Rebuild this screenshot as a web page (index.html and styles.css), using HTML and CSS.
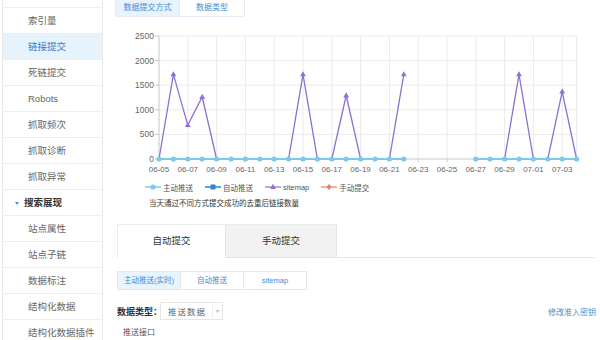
FILE: index.html
```html
<!DOCTYPE html>
<html lang="zh-CN">
<head>
  <meta charset="UTF-8">
  <title>链接提交</title>
  <link rel="stylesheet" href="styles.css">
</head>
<body>
  <div class="page">
    <ul class="side-nav">
      <li class="cut"></li>
      <li>索引量</li>
      <li class="active">链接提交</li>
      <li>死链提交</li>
      <li>Robots</li>
      <li>抓取频次</li>
      <li>抓取诊断</li>
      <li>抓取异常</li>
      <li class="group"><span class="caret"></span>搜索展现</li>
      <li>站点属性</li>
      <li>站点子链</li>
      <li>数据标注</li>
      <li>结构化数据</li>
      <li>结构化数据插件</li>
    </ul>

    <div class="main">
      <div class="top-tabs">
        <span class="on">数据提交方式</span>
        <span>数据类型</span>
      </div>

      <svg class="chart" width="485" height="155" viewBox="0 0 485 155">
        <defs>
          <circle id="dot" r="2.6" fill="#7ec8e8"/>
          <path id="tri" d="M0,-3.2 L2.9,1.9 L-2.9,1.9Z" fill="#8e6fd4"/>
        </defs>
        <!-- grid -->
        <g class="grid">
          <line x1="44" y1="14" x2="461.6" y2="14"/>
          <line x1="44" y1="38.6" x2="461.6" y2="38.6"/>
          <line x1="44" y1="63.2" x2="461.6" y2="63.2"/>
          <line x1="44" y1="87.8" x2="461.6" y2="87.8"/>
          <line x1="44" y1="112.4" x2="461.6" y2="112.4"/>
          <line x1="72.8" y1="14" x2="72.8" y2="137"/>
          <line x1="101.6" y1="14" x2="101.6" y2="137"/>
          <line x1="130.4" y1="14" x2="130.4" y2="137"/>
          <line x1="159.2" y1="14" x2="159.2" y2="137"/>
          <line x1="188" y1="14" x2="188" y2="137"/>
          <line x1="216.8" y1="14" x2="216.8" y2="137"/>
          <line x1="245.6" y1="14" x2="245.6" y2="137"/>
          <line x1="274.4" y1="14" x2="274.4" y2="137"/>
          <line x1="303.2" y1="14" x2="303.2" y2="137"/>
          <line x1="332" y1="14" x2="332" y2="137"/>
          <line x1="360.8" y1="14" x2="360.8" y2="137"/>
          <line x1="389.6" y1="14" x2="389.6" y2="137"/>
          <line x1="418.4" y1="14" x2="418.4" y2="137"/>
          <line x1="447.2" y1="14" x2="447.2" y2="137"/>
          <line x1="461.6" y1="14" x2="461.6" y2="137"/>
        </g>
        <!-- axes -->
        <g class="axis">
          <line x1="44" y1="14" x2="44" y2="137"/>
          <line x1="44" y1="137" x2="461.6" y2="137"/>
          <line x1="40" y1="14" x2="44" y2="14"/>
          <line x1="40" y1="38.6" x2="44" y2="38.6"/>
          <line x1="40" y1="63.2" x2="44" y2="63.2"/>
          <line x1="40" y1="87.8" x2="44" y2="87.8"/>
          <line x1="40" y1="112.4" x2="44" y2="112.4"/>
          <line x1="40" y1="137" x2="44" y2="137"/>
          <line x1="303.2" y1="137" x2="303.2" y2="140"/>
          <line x1="332" y1="137" x2="332" y2="140"/>
        </g>
        <g class="ylab">
          <text x="39" y="17">2500</text>
          <text x="39" y="41.6">2000</text>
          <text x="39" y="66.2">1500</text>
          <text x="39" y="90.8">1000</text>
          <text x="39" y="115.4">500</text>
          <text x="39" y="140">0</text>
        </g>
        <g class="xlab">
          <text x="44" y="150">06-05</text>
          <text x="72.8" y="150">06-07</text>
          <text x="101.6" y="150">06-09</text>
          <text x="130.4" y="150">06-11</text>
          <text x="159.2" y="150">06-13</text>
          <text x="188" y="150">06-15</text>
          <text x="216.8" y="150">06-17</text>
          <text x="245.6" y="150">06-19</text>
          <text x="274.4" y="150">06-21</text>
          <text x="303.2" y="150">06-23</text>
          <text x="332" y="150">06-25</text>
          <text x="360.8" y="150">06-27</text>
          <text x="389.6" y="150">06-29</text>
          <text x="418.4" y="150">07-01</text>
          <text x="447.2" y="150">07-03</text>
        </g>
        <!-- sitemap -->
        <polyline class="sitemap" points="44,137 58.4,52.4 72.8,103.1 87.2,75 101.6,137 116,137 130.4,137 144.8,137 159.2,137 173.6,137 188,52.4 202.4,137 216.8,137 231.2,73.5 245.6,137 260,137 274.4,137 288.8,52.4"/>
        <polyline class="sitemap" points="360.8,137 375.2,137 389.6,137 404,52.4 418.4,137 432.8,137 447.2,69.6 461.6,137"/>
        <use href="#tri" x="58.4" y="52.4"/>
        <use href="#tri" x="72.8" y="103.1"/>
        <use href="#tri" x="87.2" y="75"/>
        <use href="#tri" x="188" y="52.4"/>
        <use href="#tri" x="231.2" y="73.5"/>
        <use href="#tri" x="288.8" y="52.4"/>
        <use href="#tri" x="404" y="52.4"/>
        <use href="#tri" x="447.2" y="69.6"/>
        <!-- 主动推送 -->
        <line class="push" x1="44" y1="137" x2="288.8" y2="137"/>
        <line class="push" x1="360.8" y1="137" x2="461.6" y2="137"/>
        <use href="#dot" x="44" y="137"/>
        <use href="#dot" x="58.4" y="137"/>
        <use href="#dot" x="72.8" y="137"/>
        <use href="#dot" x="87.2" y="137"/>
        <use href="#dot" x="101.6" y="137"/>
        <use href="#dot" x="116" y="137"/>
        <use href="#dot" x="130.4" y="137"/>
        <use href="#dot" x="144.8" y="137"/>
        <use href="#dot" x="159.2" y="137"/>
        <use href="#dot" x="173.6" y="137"/>
        <use href="#dot" x="188" y="137"/>
        <use href="#dot" x="202.4" y="137"/>
        <use href="#dot" x="216.8" y="137"/>
        <use href="#dot" x="231.2" y="137"/>
        <use href="#dot" x="245.6" y="137"/>
        <use href="#dot" x="260" y="137"/>
        <use href="#dot" x="274.4" y="137"/>
        <use href="#dot" x="288.8" y="137"/>
        <use href="#dot" x="360.8" y="137"/>
        <use href="#dot" x="375.2" y="137"/>
        <use href="#dot" x="389.6" y="137"/>
        <use href="#dot" x="404" y="137"/>
        <use href="#dot" x="418.4" y="137"/>
        <use href="#dot" x="432.8" y="137"/>
        <use href="#dot" x="447.2" y="137"/>
        <use href="#dot" x="461.6" y="137"/>
      </svg>

      <div class="legend">
        <span class="item">
          <svg width="16" height="8"><line x1="0" y1="4" x2="16" y2="4" stroke="#7ec8e8" stroke-width="1.5"/><circle cx="8" cy="4" r="2.6" fill="#7ec8e8"/></svg>
          主动推送
        </span>
        <span class="item">
          <svg width="16" height="8"><line x1="0" y1="4" x2="16" y2="4" stroke="#2f86d6" stroke-width="1.5"/><rect x="5.5" y="1.5" width="5" height="5" fill="#2f86d6"/></svg>
          自动推送
        </span>
        <span class="item">
          <svg width="16" height="8"><line x1="0" y1="4" x2="16" y2="4" stroke="#8e6fd4" stroke-width="1.2"/><path d="M8,0.8 L10.8,6 L5.2,6Z" fill="#8e6fd4"/></svg>
          sitemap
        </span>
        <span class="item">
          <svg width="16" height="8"><line x1="0" y1="4" x2="16" y2="4" stroke="#f0796a" stroke-width="1.2"/><path d="M8,1 L10.5,4 L8,7 L5.5,4Z" fill="#f0796a"/></svg>
          手动提交
        </span>
      </div>
      <p class="note">当天通过不同方式提交成功的去重后链接数量</p>

      <div class="big-tabs">
        <span class="on">自动提交</span>
        <span>手动提交</span>
      </div>

      <div class="sub-tabs">
        <span class="on">主动推送(实时)</span>
        <span>自动推送</span>
        <span>sitemap</span>
      </div>

      <div class="form-row">
        <span class="label">数据类型：</span>
        <span class="select"><span class="value">推送数据</span><span class="arrow">▾</span></span>
        <a class="key-link" href="#">修改准入密钥</a>
      </div>
      <div class="api">推送接口</div>
    </div>
  </div>
</body>
</html>
```

FILE: styles.css
```css
body {
  margin: 0;
  width: 600px;
  height: 340px;
  overflow: hidden;
  background: #fff;
  color: #555;
  font-family: "Liberation Sans", "Noto Sans CJK SC", sans-serif;
}

.page {
  display: flex;
  align-items: flex-start;
}

/* left menu */
.side-nav {
  list-style: none;
  margin: 0 0 0 2px;
  padding: 0;
  width: 99px;
  flex-shrink: 0;
  border-left: 1px solid #e8e8e8;
  border-right: 1px solid #e8e8e8;
}

.side-nav li {
  height: 25px;
  line-height: 25px;
  padding-left: 25px;
  border-bottom: 1px solid #efefef;
  font-size: 9.5px;
  color: #666;
  white-space: nowrap;
}

.side-nav li.cut {
  height: 7px;
}

.side-nav li.active {
  background: #e6f2fc;
  color: #2a7fd4;
}

.side-nav li.group {
  padding-left: 12px;
  color: #333;
  font-weight: bold;
}

.caret {
  display: inline-block;
  width: 0;
  height: 0;
  margin-right: 5px;
  vertical-align: middle;
  border-left: 2px solid transparent;
  border-right: 2px solid transparent;
  border-top: 3px solid #4a90d9;
}

/* main column */
.main {
  flex: 1;
  padding-left: 12px;
}

.top-tabs {
  display: flex;
}

.top-tabs span {
  width: 63px;
  height: 16px;
  line-height: 16px;
  text-align: center;
  font-size: 8px;
  color: #3b8fd6;
  border: 1px solid #e4edf5;
  border-top: none;
}

.top-tabs span + span {
  width: 64px;
  border-left: none;
}

.top-tabs span.on {
  background: #e8f3fc;
}

.chart {
  display: block;
  margin-top: 5px;
}

.grid line {
  stroke: #ebebeb;
  stroke-width: 1;
}

.axis line {
  stroke: #c8c8c8;
  stroke-width: 1;
}

.ylab text {
  font-size: 8.5px;
  fill: #666;
  text-anchor: end;
}

.xlab text {
  font-size: 8px;
  fill: #666;
  text-anchor: middle;
}

.sitemap {
  fill: none;
  stroke: #8e6fd4;
  stroke-width: 1.3;
}

.push {
  stroke: #7ec8e8;
  stroke-width: 2;
}

.legend {
  display: flex;
  gap: 12px;
  margin-top: 4px;
  padding-left: 30px;
  font-size: 7.5px;
  color: #555;
  height: 12px;
  align-items: center;
}

.legend .item {
  display: flex;
  align-items: center;
  gap: 2px;
}

.note {
  margin: 5px 0 0;
  padding-left: 34px;
  font-size: 7.5px;
  color: #333;
  line-height: 12px;
}

/* tabs */
.big-tabs {
  display: flex;
  margin: 14px 5px 0 2px;
  border-bottom: 1px solid #e6e6e6;
}

.big-tabs span {
  width: 110px;
  height: 32px;
  line-height: 32px;
  text-align: center;
  font-size: 9.5px;
  color: #333;
  background: #f2f2f2;
  border-top: 1px solid #ececec;
  border-right: 1px solid #e6e6e6;
}

.big-tabs span.on {
  width: 107px;
  background: #fff;
  border-left: 1px solid #ececec;
  margin-bottom: -1px;
  height: 33px;
}

.sub-tabs {
  display: flex;
  margin: 13px 0 0 2px;
}

.sub-tabs span {
  width: 62px;
  height: 17px;
  line-height: 17px;
  text-align: center;
  font-size: 7.5px;
  color: #3b8fd6;
  border: 1px solid #e6e6e6;
  margin-left: -1px;
}

.sub-tabs span:first-child {
  margin-left: 0;
}

.sub-tabs span.on {
  background: #e8f3fc;
}

.form-row {
  display: flex;
  align-items: center;
  margin: 12px 4px 0 2px;
  height: 18px;
}

.label {
  width: 43px;
  font-size: 9px;
  font-weight: bold;
  color: #333;
  white-space: nowrap;
}

.select {
  display: flex;
  align-items: center;
  width: 61px;
  height: 16px;
  border: 1px solid #e6e6e6;
  font-size: 8.5px;
  color: #666;
}

.select .value {
  padding-left: 7px;
  letter-spacing: 1px;
  width: 44px;
}

.select .arrow {
  font-size: 6px;
  color: #bbb;
  border-left: 1px solid #f0f0f0;
  padding-left: 3px;
  line-height: 14px;
}

.key-link {
  margin-left: auto;
  font-size: 8px;
  color: #3b8fd6;
  text-decoration: none;
}

.api {
  margin-top: 6px;
  padding-left: 8px;
  font-size: 8px;
  color: #555;
  line-height: 14px;
}
```
